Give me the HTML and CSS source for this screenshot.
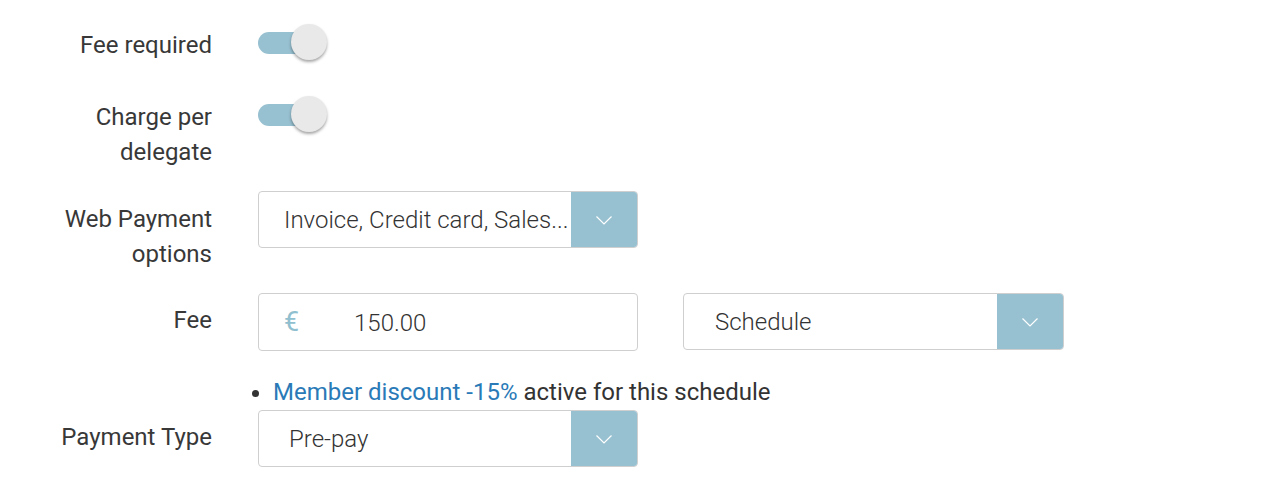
FILE: index.html
```html
<!DOCTYPE html>
<html lang="en">
<head>
<meta charset="utf-8">
<title>Fee settings</title>
<link rel="stylesheet" href="styles.css">
</head>
<body>
<form class="form">
  <div class="row row-fee-required">
    <div class="label">Fee required</div>
    <div class="control">
      <span class="toggle"><span class="track"></span><span class="knob"></span></span>
    </div>
  </div>
  <div class="row row-charge">
    <div class="label">Charge per<br>delegate</div>
    <div class="control">
      <span class="toggle"><span class="track"></span><span class="knob"></span></span>
    </div>
  </div>
  <div class="row row-web">
    <div class="label pad">Web Payment<br>options</div>
    <div class="control">
      <div class="select">
        <span class="select-text tight">Invoice, Credit card, Sales...</span>
        <span class="select-btn"><svg width="16" height="9" viewBox="0 0 16 9"><polyline points="0.5,0.5 8,8 15.5,0.5" fill="none" stroke="#fff" stroke-width="1.2"/></svg></span>
      </div>
    </div>
  </div>
  <div class="row row-fee">
    <div class="label pad-fee">Fee</div>
    <div class="control fee-controls">
      <div class="input">
        <span class="currency">€</span>
        <span class="amount">150.00</span>
      </div>
      <div class="select select-sched">
        <span class="select-text">Schedule</span>
        <span class="select-btn"><svg width="16" height="9" viewBox="0 0 16 9"><polyline points="0.5,0.5 8,8 15.5,0.5" fill="none" stroke="#fff" stroke-width="1.2"/></svg></span>
      </div>
    </div>
  </div>
  <div class="row row-discount">
    <div class="label"></div>
    <div class="control">
      <ul class="notes">
        <li><a class="link" href="#">Member discount -15%</a> active for this schedule</li>
      </ul>
    </div>
  </div>
  <div class="row row-payment">
    <div class="label pad-pay">Payment Type</div>
    <div class="control">
      <div class="select">
        <span class="select-text prepay">Pre-pay</span>
        <span class="select-btn"><svg width="16" height="9" viewBox="0 0 16 9"><polyline points="0.5,0.5 8,8 15.5,0.5" fill="none" stroke="#fff" stroke-width="1.2"/></svg></span>
      </div>
    </div>
  </div>
</form>
</body>
</html>
```
FILE: styles.css
```css
* { box-sizing: border-box; }
html, body { margin: 0; padding: 0; background: #fff; }
body {
  font-family: Roboto, "Liberation Sans", Arial, sans-serif;
  font-size: 24px;
  color: #333;
  width: 1264px;
  height: 492px;
  overflow: hidden;
}
.form {
  padding: 28px 0 0 8px;
}
.row {
  display: grid;
  grid-template-columns: 204px 1fr;
  column-gap: 46px;
  align-items: start;
}
.label {
  text-align: right;
  line-height: 35px;
  color: #383838;
}
.label.pad { padding-top: 10.5px; }
.label.pad-fee { padding-top: 9.5px; }
.label.pad-pay { padding-top: 9.5px; }

.row-fee-required { height: 35px; margin-bottom: 36.5px; }
.row-charge { height: 70px; margin-bottom: 21.5px; }
.row-web { height: 80px; margin-bottom: 22px; }
.row-fee { height: 58px; margin-bottom: 23.5px; }
.row-discount { height: 35px; margin-bottom: 0.5px; }

/* toggle */
.toggle {
  position: relative;
  display: block;
  width: 72px;
  height: 37px;
  margin-top: -4px;
}
.track {
  position: absolute;
  left: 0;
  top: 8px;
  width: 56px;
  height: 22px;
  border-radius: 11px;
  background: #97c0d0;
}
.knob {
  position: absolute;
  left: 33px;
  top: 0;
  width: 36px;
  height: 36px;
  border-radius: 50%;
  background: #e9e9e9;
  box-shadow: 0 2px 3px rgba(0,0,0,0.35);
}

/* select */
.select {
  display: flex;
  width: 380px;
  height: 57px;
  border: 1px solid #cfcfcf;
  border-radius: 4px;
  overflow: hidden;
  background: #fff;
}
.select-text {
  flex: 1;
  min-width: 0;
  display: flex;
  align-items: center;
  padding-left: 30px;
  color: #333;
  font-weight: 300;
  white-space: nowrap;
  overflow: hidden;
}
.select-text.tight { padding-left: 25px; }
.select-text.prepay { padding-left: 30px; }
.select-sched .select-text { padding-left: 31px; }
.select-btn {
  width: 66px;
  flex: none;
  background: #97c0d0;
  display: flex;
  align-items: center;
  justify-content: center;
  padding-top: 2px;
}
.select-sched { width: 381px; }

.fee-controls {
  display: flex;
  gap: 45px;
}
.input {
  display: flex;
  align-items: center;
  width: 380px;
  height: 58px;
  border: 1px solid #cfcfcf;
  border-radius: 4px;
  padding-top: 1px;
}
.currency {
  width: 95px;
  padding-left: 25px;
  color: #90bfcf;
  font-weight: 400;
  font-size: 27px;
  line-height: 1;
}
.amount { color: #333; font-weight: 300; }

/* notes */
.notes {
  margin: 0;
  padding: 0 0 0 15px;
  line-height: 35px;
}
.notes li { list-style: disc; }
.link { color: #2a7ab8; text-decoration: none; }
```
